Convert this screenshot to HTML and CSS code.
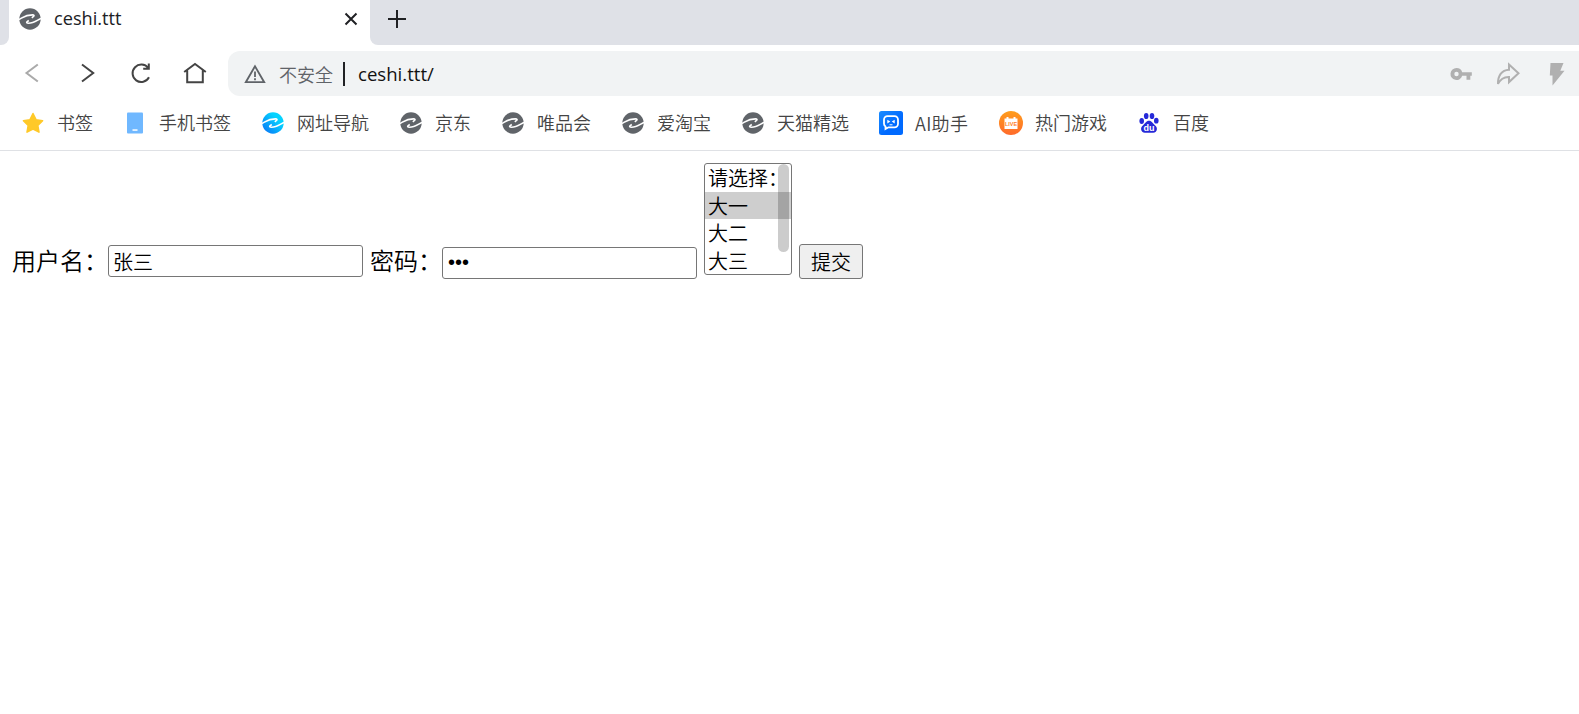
FILE: index.html
```html
<!DOCTYPE html>
<html lang="zh-CN">
<head>
  <meta charset="UTF-8">
  <title>ceshi.ttt</title>
  <link rel="stylesheet" href="styles.css">
</head>
<body>
  <svg class="defs">
    <defs>
      <linearGradient id="blue" x1="1" y1="0" x2="0" y2="1">
        <stop offset="0.3" stop-color="#05d3ff"/>
        <stop offset="1" stop-color="#0a6df5"/>
      </linearGradient>
      <linearGradient id="ai" x1="0" y1="0" x2="1" y2="1">
        <stop offset="0" stop-color="#1a8cff"/>
        <stop offset="0.6" stop-color="#006aff"/>
      </linearGradient>
      <linearGradient id="orange" x1="0" y1="0" x2="0" y2="1">
        <stop offset="0" stop-color="#ff9d1c"/>
        <stop offset="1" stop-color="#ff6a2b"/>
      </linearGradient>
      <symbol id="globe" viewBox="0 0 24 24">
        <circle cx="12" cy="12" r="10.700"/>
        <g fill="none" stroke="#fff" stroke-width="1.600">
          <path d="M.5 12.600C4.500 10.800 7 7.900 14.500 7.900c1.600 0 2 .7 1 1.600L13.800 10.800"/>
          <path d="M23.500 11.200c-4 1.600-7.500 5-13 5-1.800 0-2.300-.7-1.300-1.500l1.600-1.200"/>
        </g>
      </symbol>
    </defs>
  </svg>

  <div class="tabs">
    <div class="tab-edge"></div>
    <div class="tab">
      <svg class="icon gray" viewBox="0 0 24 24"><use href="#globe"/></svg>
      <span class="tab-title">ceshi.ttt</span>
      <svg class="close" viewBox="0 0 14 14"><path d="M1.500 1.500l11 11M12.500 1.500l-11 11"/></svg>
    </div>
    <div class="tab-rest">
      <svg class="plus" viewBox="0 0 18 18"><path d="M9 0v18M0 9h18"/></svg>
    </div>
  </div>

  <div class="toolbar">
    <div class="nav">
      <svg class="line back" viewBox="0 0 24 24"><path d="M16.800 3.500L5.500 12l11.300 8.500"/></svg>
      <svg class="line" viewBox="0 0 24 24"><path d="M7 3.500L18.200 12 7 20.500"/></svg>
      <svg class="line" viewBox="0 0 24 24"><path d="M20 16.300A8.700 8.700 0 1 1 19.200 7M19.800 2.500v5.300h-5.600"/></svg>
      <svg class="line" viewBox="0 0 24 24"><path d="M1.200 11L12 3l10.800 8M4.200 9.500v11.700h15.600V9.500"/></svg>
    </div>
    <div class="address">
      <svg class="warn" viewBox="0 0 24 24"><path d="M12 4.200L2.800 20.200h18.400z"/><path d="M12 9.500v5.500M12 16.200v2"/></svg>
      <span class="unsafe">不安全</span>
      <span class="bar"></span>
      <span class="url">ceshi.ttt/</span>
      <div class="actions">
        <svg viewBox="0 0 24 24"><path fill-rule="evenodd" d="M7.500 6a6 6 0 0 1 5.700 4.200h9.600v3.600h-1.500v4h-3.800v-4h-4.300A6 6 0 1 1 7.500 6zm0 3.800a2.200 2.200 0 1 0 0 4.400 2.200 2.200 0 0 0 0-4.400z"/></svg>
        <svg class="share" viewBox="0 0 24 24"><path d="M13 2.500l9.500 8.800-9.500 8.800v-5.200c-5-.2-8.500 2-11 7C1.800 14 5.500 8 13 7.700z"/></svg>
        <svg viewBox="0 0 24 24"><path d="M5.500 1h13l-3.200 7.800h4.200L7.500 23.500v-10H4.800z"/></svg>
      </div>
    </div>
  </div>

  <div class="bookmarks">
    <div class="bookmark">
      <svg class="icon" viewBox="0 0 24 24"><path fill="#ffc928" stroke="#ffc928" stroke-width="1.500" stroke-linejoin="round" d="M12 2.500l3 6.200 6.600 1-4.800 4.700 1.200 6.800-6-3.200-6 3.200 1.200-6.800-4.800-4.700 6.600-1z"/></svg>
      <span>书签</span>
    </div>
    <div class="bookmark">
      <svg class="icon" viewBox="0 0 24 24"><rect x="4" y="1.500" width="16" height="21" rx="1" fill="#70b8ff"/><rect x="9.500" y="18.300" width="5" height="1.500" fill="#fff"/></svg>
      <span>手机书签</span>
    </div>
    <div class="bookmark">
      <svg class="icon blue" viewBox="0 0 24 24"><use href="#globe"/></svg>
      <span>网址导航</span>
    </div>
    <div class="bookmark">
      <svg class="icon gray" viewBox="0 0 24 24"><use href="#globe"/></svg>
      <span>京东</span>
    </div>
    <div class="bookmark">
      <svg class="icon gray" viewBox="0 0 24 24"><use href="#globe"/></svg>
      <span>唯品会</span>
    </div>
    <div class="bookmark">
      <svg class="icon gray" viewBox="0 0 24 24"><use href="#globe"/></svg>
      <span>爱淘宝</span>
    </div>
    <div class="bookmark">
      <svg class="icon gray" viewBox="0 0 24 24"><use href="#globe"/></svg>
      <span>天猫精选</span>
    </div>
    <div class="bookmark">
      <svg class="icon" viewBox="0 0 24 24">
        <rect width="24" height="24" rx="2.500" fill="url(#ai)"/>
        <path fill="none" stroke="#fff" stroke-width="1.800" d="M8.500 5.200h7a3.500 3.500 0 0 1 3.500 3.500v4.100a3.500 3.500 0 0 1-3.500 3.500H9.500L6.500 18v-2.500C5.400 14.800 5 14 5 12.800V8.700a3.500 3.500 0 0 1 3.500-3.500z"/>
        <path fill="#fff" d="M8.300 8.800l3 1.800-3 1.800zM15.700 8.800l-3 1.800 3 1.800z"/>
        <path stroke="#fff" stroke-width="1" d="M10.500 13.800h3"/>
      </svg>
      <span class="ai">AI助手</span>
    </div>
    <div class="bookmark">
      <svg class="icon" viewBox="0 0 24 24">
        <circle cx="12" cy="12" r="12" fill="url(#orange)"/>
        <path fill="#fff" d="M5.500 7.500h2V6h2v1.500h5V6h2v1.500h2V18h-13z"/>
        <text class="live" x="12" y="15.300">LIVE</text>
      </svg>
      <span>热门游戏</span>
    </div>
    <div class="bookmark">
      <svg class="icon" viewBox="0 0 24 24">
        <g fill="#2529d8">
          <ellipse cx="4.700" cy="10" rx="2.300" ry="3"/>
          <ellipse cx="9.200" cy="5" rx="2.300" ry="3.100"/>
          <ellipse cx="15" cy="5" rx="2.300" ry="3.100"/>
          <ellipse cx="19.300" cy="9.700" rx="2.300" ry="2.900"/>
          <path d="M12 9.700c3 0 3.500 2.500 5.700 4.300 2 1.700 2.700 3.400 1.900 5.500-1.200 2.900-4.800 2.300-7.600 2.300s-6.400.6-7.600-2.300c-.8-2.100-.1-3.800 1.900-5.500C8.500 12.200 9 9.700 12 9.700z"/>
        </g>
        <text class="du" x="12" y="20.200">du</text>
      </svg>
      <span>百度</span>
    </div>
  </div>

  <form class="page">
    <label for="username">用户名：</label>
    <input type="text" id="username" value="张三">
    <label for="password">密码：</label>
    <input type="password" id="password" value="123">
    <div class="grade">
      <div class="option">请选择：</div>
      <div class="option selected">大一</div>
      <div class="option">大二</div>
      <div class="option">大三</div>
      <div class="thumb"></div>
    </div>
    <button type="button">提交</button>
  </form>
</body>
</html>
```
FILE: styles.css
```css
* {
  box-sizing: border-box;
}
body {
  margin: 0;
  height: 714px;
  overflow: hidden;
  background: #fff;
  font-family: "Open Sans", "Noto Sans CJK SC", sans-serif;
}
svg {
  flex: none;
  display: block;
}
.defs {
  position: absolute;
  width: 0;
  height: 0;
}
.icon {
  width: 24px;
  height: 24px;
}
.gray {
  fill: #606469;
}
.blue {
  fill: url(#blue);
}

/* tabs */
.tabs {
  display: flex;
  height: 45px;
}
.tab-edge {
  width: 9px;
  background: #dfe1e7;
  border-bottom-right-radius: 8px;
}
.tab {
  width: 361px;
  display: flex;
  align-items: center;
  padding: 0 12px 7px 9px;
}
.tab-title {
  flex: 1;
  margin-left: 12px;
  padding-bottom: 2px;
  font-size: 18.2px;
  color: #202124;
}
.close {
  width: 14px;
  height: 14px;
  fill: none;
  stroke: #202124;
  stroke-width: 2;
}
.tab-rest {
  flex: 1;
  padding: 10px 18px;
  background: #dfe1e7;
  border-bottom-left-radius: 8px;
}
.plus {
  width: 18px;
  height: 18px;
  stroke: #202124;
  stroke-width: 2;
}

/* toolbar */
.toolbar {
  display: flex;
  height: 51px;
  padding-top: 6px;
}
.nav {
  width: 228px;
  display: flex;
  gap: 30px;
  padding: 10px 0 0 21px;
}
.line {
  width: 24px;
  height: 24px;
  fill: none;
  stroke: #444;
  stroke-width: 2;
}
.back {
  stroke: #aaa;
}
.address {
  flex: 1;
  display: flex;
  align-items: center;
  padding-left: 15px;
  background: #f1f3f4;
  border-radius: 12px 0 0 12px;
}
.warn {
  width: 24px;
  height: 24px;
  fill: none;
  stroke: #5f6368;
  stroke-width: 1.8;
}
.unsafe {
  margin-left: 12px;
  font-size: 18px;
  font-weight: 350;
  color: #5f6368;
}
.bar {
  width: 2px;
  height: 24px;
  margin: 0 13px 0 10px;
  background: #202124;
}
.url {
  font-size: 18.6px;
  color: #111;
}
.actions {
  display: flex;
  gap: 23px;
  margin-left: auto;
  padding-right: 10px;
}
.actions svg {
  width: 24px;
  height: 24px;
  fill: #b0b0b0;
}
.actions .share {
  margin-right: 2px;
  fill: none;
  stroke: #b0b0b0;
  stroke-width: 2;
}

/* bookmarks */
.bookmarks {
  display: flex;
  align-items: center;
  gap: 30px;
  height: 55px;
  padding: 0 21px 1px;
  border-bottom: 1px solid #dfe1e5;
}
.bookmark {
  display: flex;
  align-items: center;
  gap: 12px;
  height: 24px;
  font-size: 18px;
  font-weight: 350;
  line-height: 24px;
  color: #444;
  white-space: nowrap;
}
.bookmark span {
  padding-top: 1px;
}
.bookmark .ai {
  width: 54px;
  font-family: "Noto Sans CJK SC", sans-serif;
  letter-spacing: 0.3px;
}
.live {
  font: bold 5.5px "Liberation Sans", sans-serif;
  fill: #ff7f26;
  text-anchor: middle;
}
.du {
  font: bold 9px "Liberation Sans", sans-serif;
  fill: #fff;
  text-anchor: middle;
}

/* form */
.page {
  display: flex;
  align-items: flex-end;
  padding: 12px;
  font-weight: 350;
  color: #000;
}
.page label {
  width: 96px;
  margin-bottom: 2px;
  font-size: 24px;
  line-height: 32px;
  white-space: nowrap;
}
.page label[for="password"] {
  width: 72px;
}
.page input {
  width: 255px;
  height: 32px;
  margin: 0 7px 2px 0;
  padding: 2px 4px;
  border: 1px solid #767676;
  border-radius: 3px;
  font-family: inherit;
  font-size: 20px;
  font-weight: 350;
}
.page #password {
  margin-bottom: 0;
  padding-bottom: 4px;
  padding-left: 5px;
  font-family: "Liberation Sans", sans-serif;
  font-size: 20px;
}
.grade {
  position: relative;
  width: 88px;
  height: 112px;
  margin: 0 7px 4px 0;
  border: 1px solid #767676;
  border-radius: 3px;
  overflow: hidden;
}
.option {
  height: 27.5px;
  padding-left: 3px;
  font-size: 20px;
  line-height: 30px;
  white-space: nowrap;
}
.selected {
  background: #cecece;
}
.thumb {
  position: absolute;
  top: 0;
  right: 2px;
  width: 11px;
  height: 88px;
  border-radius: 6px;
  background: rgba(0, 0, 0, 0.2);
}
.page button {
  width: 64px;
  height: 35px;
  padding: 0;
  border: 1px solid #767676;
  border-radius: 3px;
  background: #efefef;
  font-family: inherit;
  font-size: 20px;
  font-weight: 350;
}
```
